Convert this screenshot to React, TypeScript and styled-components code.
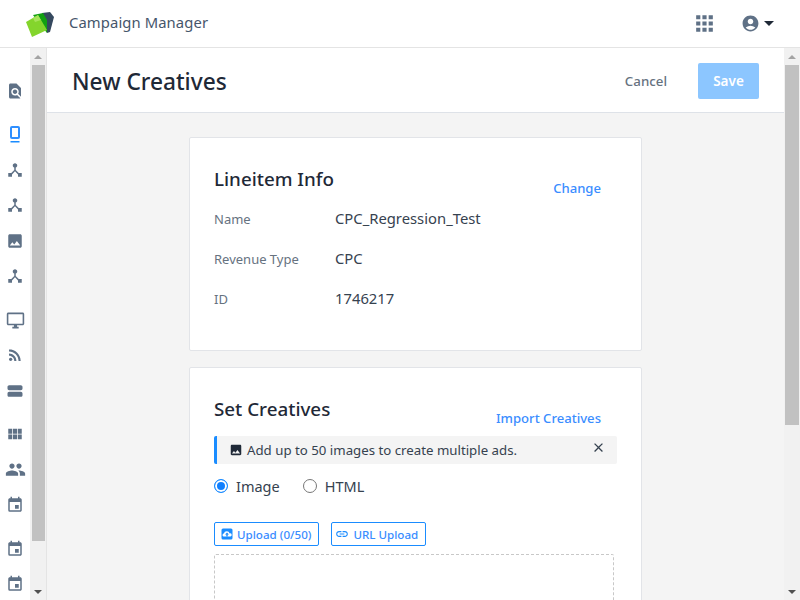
import React from "react";
import styled, { createGlobalStyle } from "styled-components";
import {
  MdFindInPage, MdDeviceHub, MdImage, MdOutlineDesktopWindows, MdRssFeed,
  MdViewStream, MdViewModule, MdPeople, MdEvent, MdApps, MdAccountCircle, MdLink, MdClose,
} from "react-icons/md";

const Global = createGlobalStyle`
  html, body { margin: 0; padding: 0; height: 100%; overflow: hidden; background: #fff; }
  * { box-sizing: border-box; }
  body { font-family: "Noto Sans", "Open Sans", sans-serif; color: #1f2937; }
`;

const Shell = styled.div`
  width: 800px; height: 600px; display: flex; flex-direction: column; overflow: hidden;
`;
const TopBar = styled.header`
  height: 48px; flex: none; display: flex; align-items: center; border-bottom: 1px solid #e4e4e4;
  padding: 0 25px 1px 26px; background: #fff;
`;
const Logo = styled.svg`width: 28px; height: 26px; flex: none; margin-top: 1px;`;
const Brand = styled.span`margin: -3px 0 0 15px; font-size: 14.8px; color: #46566b; flex: 1; letter-spacing: .1px;`;
const AppsIcon = styled(MdApps)`font-size: 25px; color: #5f7186; margin-right: 24px;`;
const Caret = styled.span`
  width: 0; height: 0; border-left: 5px solid transparent; border-right: 5px solid transparent;
  border-top: 5px solid #1f2937; margin: 0 1px 0 4px;
`;
const UserIcon = styled(MdAccountCircle)`font-size: 19px; color: #5f7186;`;

const Body = styled.div`flex: 1; display: flex; min-height: 0;`;
const IconRail = styled.nav`
  width: 30px; flex: none; display: flex; flex-direction: column; align-items: center; padding-top: 25px;
`;
const RailItem = styled.div<{ $gap: number; $size: number }>`
  height: 35px; margin-top: ${p => p.$gap}px; display: flex; align-items: center; justify-content: center; flex: none;
  color: #5f7186; font-size: ${p => p.$size}px;
`;
const PhoneMark = styled.svg`width: 12px; height: 18px; margin-top: 5px;`;
const Track = styled.div`
  width: 17px; flex: none; background: #f1f1f1; display: flex; flex-direction: column; align-items: center;
  border-right: 1px solid #e4e4e4;
`;
const MainTrack = styled(Track)`width: 16px; border-right: 0;`;
const Arrow = styled.div<{ $down?: boolean }>`
  height: 17px; flex: none; display: flex; align-items: center; justify-content: center;
  &::before {
    content: ""; width: 0; height: 0; border-left: 4px solid transparent; border-right: 4px solid transparent;
    ${p => (p.$down ? "border-top: 4px solid #505050;" : "border-bottom: 4px solid #a3a3a3;")}
  }
`;
const Thumb = styled.div<{ $h: number }>`width: 13px; height: ${p => p.$h}px; flex: none; background: #c1c1c1;`;
const MainThumb = styled(Thumb)`width: 14px;`;
const Spacer = styled.div`flex: 1;`;

const Main = styled.main`flex: 1; display: flex; flex-direction: column; min-width: 0; background: #f4f4f4;`;
const PageHead = styled.div`
  height: 65px; flex: none; display: flex; align-items: center; background: #fff;
  border-bottom: 1px solid #dee2e8; padding: 2px 25px 0 25px;
`;
const PageTitle = styled.h1`margin: 2px 0 0; font-size: 22.7px; font-weight: 500; flex: 1; color: #1f2937; line-height: 1;`;
const Cancel = styled.span`font-size: 13.3px; font-weight: 500; color: #66727f; margin-right: 31px;`;
const Save = styled.button`
  width: 61px; height: 36px; border: 0; border-radius: 2px; background: #8cc6ff; color: #fff;
  font: 600 13.5px "Noto Sans", sans-serif; padding: 0;
`;
const Content = styled.div`
  flex: 1; display: flex; flex-direction: column; align-items: center; gap: 16px; padding: 24px 0 0 0; overflow: hidden;
`;
const Card = styled.section`
  width: 453px; flex: none; background: #fff; border: 1px solid #e2e4e8; border-radius: 2px; padding: 24px;
`;
const InfoCard = styled(Card)`height: 214px; padding-top: 28px;`;
const CreativeCard = styled(Card)`padding-bottom: 40px; padding-top: 28px;`;
const CardHead = styled.div`display: flex; justify-content: space-between; align-items: flex-start; padding-right: 16px;`;
const CardTitle = styled.h2`margin: 0; font-size: 18.8px; font-weight: 500; color: #1f2937; line-height: 26px;`;
const LinkText = styled.a`font-size: 13.1px; font-weight: 500; color: #3a8dff; line-height: 18px;`;
const ChangeLink = styled(LinkText)`margin-top: 13px;`;
const ImportLink = styled(LinkText)`margin-top: 13px;`;
const InfoRows = styled.dl`margin: 11px 0 0; display: grid; grid-template-columns: 121px 1fr; row-gap: 19px;`;
const Term = styled.dt`font-size: 13px; line-height: 20px; color: #66727f; padding-top: 1px;`;
const Value = styled.dd`margin: 0; font-size: 14.8px; line-height: 20px; color: #36424f;`;
const Notice = styled.div`
  margin-top: 9px; height: 28px; width: 403px; background: #f4f4f4; border-left: 3px solid #1a8cff; border-radius: 2px;
  display: flex; align-items: center; padding: 0 11px 0 12px; font-size: 13.25px; color: #36424f; gap: 4px;
`;
const NoticeText = styled.span`flex: 1;`;
const CloseIcon = styled(MdClose)`font-size: 15px; color: #36424f; margin-top: -6px;`;
const NoticeImage = styled(MdImage)`font-size: 14px; color: #1f2937;`;
const RadioRow = styled.div`display: flex; align-items: center; margin-top: 12px; height: 20px; font-size: 14.5px; color: #36424f;`;
const RadioLabel = styled.label`display: flex; align-items: center; gap: 8px; margin-right: 23px;`;
const RadioMark = styled.span<{ $on?: boolean }>`
  width: 14px; height: 14px; border-radius: 50%; flex: none; background: #fff;
  border: ${p => (p.$on ? "1.5px solid #1a8cff" : "1.5px solid #777")};
  ${p => p.$on && "box-shadow: inset 0 0 0 2px #fff; background: #0f7fff;"}
`;
const ButtonRow = styled.div`display: flex; gap: 12px; margin-top: 26px;`;
const OutlineBtn = styled.button<{ $tight?: boolean }>`
  height: 24px; display: flex; align-items: center; gap: ${p => (p.$tight ? 4 : 3)}px; padding: 0 7px 0 ${p => (p.$tight ? 3 : 5)}px; background: #fff;
  border: 1px solid #1a8cff; border-radius: 2px; color: #3a8dff; font: 500 11.6px "Noto Sans", sans-serif;
`;
const BtnIcon = styled.span`display: flex; font-size: 14px; color: #1a8cff;`;
const CloudBox = styled.svg`width: 14px; height: 14px;`;
const DropZone = styled.div`
  margin-top: 8px; width: 400px; height: 200px; border: 1px dashed #c8c8c8; border-radius: 2px;
`;

const rail = [
  { gap: 0, size: 18, I: MdFindInPage },
  { gap: 7, size: 18, phone: true },
  { gap: 2, size: 18, I: MdDeviceHub },
  { gap: 0, size: 18, I: MdDeviceHub },
  { gap: 1, size: 18, I: MdImage },
  { gap: 0, size: 18, I: MdDeviceHub },
  { gap: 10, size: 19, I: MdOutlineDesktopWindows },
  { gap: -1, size: 18, I: MdRssFeed },
  { gap: 1, size: 20, I: MdViewStream },
  { gap: 8, size: 18, I: MdViewModule },
  { gap: 1, size: 21, I: MdPeople },
  { gap: 0, size: 18, I: MdEvent },
  { gap: 9, size: 18, I: MdEvent },
  { gap: 0, size: 18, I: MdEvent },
];

export default function App() {
  return (
    <Shell>
      <Global />
      <TopBar>
        <Logo viewBox="0 0 28 26">
          <polygon points="16,2 24,1 28,6 24,21 21,22" fill="#36495f" />
          <polygon points="7,4 17,2 21,9 21,22" fill="#12a012" />
          <polygon points="0,11 12,4 21,19 6,26" fill="#84d52c" />
          <polygon points="7,7 12,4 15,9 9,11" fill="#a6e35a" />
        </Logo>
        <Brand>Campaign Manager</Brand>
        <AppsIcon />
        <UserIcon />
        <Caret />
      </TopBar>
      <Body>
        <IconRail>
          {rail.map((r, i) => (
            <RailItem key={i} $gap={r.gap} $size={r.size}>
              {r.I ? <r.I /> : (
                <PhoneMark viewBox="0 0 12 18">
                  <rect x="1" y="0" width="10" height="13" rx="2" fill="#2f8fff" />
                  <rect x="3" y="2" width="6" height="9" fill="#fff" />
                  <rect x="1.5" y="15" width="9" height="1.5" fill="#1a8cff" />
                </PhoneMark>
              )}
            </RailItem>
          ))}
        </IconRail>
        <Track>
          <Arrow />
          <Thumb $h={476} />
          <Spacer />
          <Arrow $down />
        </Track>
        <Main>
          <PageHead>
            <PageTitle>New Creatives</PageTitle>
            <Cancel>Cancel</Cancel>
            <Save>Save</Save>
          </PageHead>
          <Content>
            <InfoCard>
              <CardHead>
                <CardTitle>Lineitem Info</CardTitle>
                <ChangeLink>Change</ChangeLink>
              </CardHead>
              <InfoRows>
                <Term>Name</Term><Value>CPC_Regression_Test</Value>
                <Term>Revenue Type</Term><Value>CPC</Value>
                <Term>ID</Term><Value>1746217</Value>
              </InfoRows>
            </InfoCard>
            <CreativeCard>
              <CardHead>
                <CardTitle>Set Creatives</CardTitle>
                <ImportLink>Import Creatives</ImportLink>
              </CardHead>
              <Notice>
                <NoticeImage />
                <NoticeText>Add up to 50 images to create multiple ads.</NoticeText>
                <CloseIcon />
              </Notice>
              <RadioRow>
                <RadioLabel><RadioMark $on />Image</RadioLabel>
                <RadioLabel><RadioMark />HTML</RadioLabel>
              </RadioRow>
              <ButtonRow>
                <OutlineBtn>
                  <BtnIcon>
                    <CloudBox viewBox="0 0 14 14">
                      <rect x="1.5" y="1.5" width="11" height="11" rx="1.5" fill="#1a8cff" />
                      <path d="M3.5 9.5 a1.5 1.5 0 0 1 .4-2.9 a3 3 0 0 1 5.8-.2 a1.6 1.6 0 0 1 .8 3.1 z" fill="#fff" />
                      <path d="M7 5.5 l2 2 h-1.3 v2 h-1.4 v-2 h-1.3 z" fill="#1a8cff" />
                    </CloudBox>
                  </BtnIcon>
                  Upload (0/50)
                </OutlineBtn>
                <OutlineBtn $tight><BtnIcon><MdLink /></BtnIcon>URL Upload</OutlineBtn>
              </ButtonRow>
              <DropZone />
            </CreativeCard>
          </Content>
        </Main>
        <MainTrack>
          <Arrow />
          <MainThumb $h={360} />
          <Spacer />
          <Arrow $down />
        </MainTrack>
      </Body>
    </Shell>
  );
}
